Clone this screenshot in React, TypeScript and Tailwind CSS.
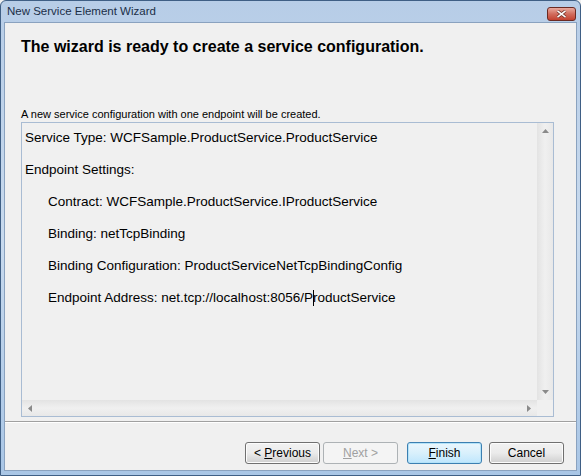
import React from "react";

const font = { fontFamily: '"Liberation Sans", Arial, sans-serif' };

// Tiny scrollbar arrow glyph
const Arrow = ({ dir }: { dir: "up" | "down" | "left" | "right" }) => {
  const pts = {
    up: "0,4 7,4 3.5,0",
    down: "0,0 7,0 3.5,4",
    left: "4,0 4,7 0,3.5",
    right: "0,0 0,7 4,3.5",
  }[dir];
  const vertical = dir === "up" || dir === "down";
  return (
    <svg width={vertical ? 7 : 4} height={vertical ? 4 : 7} viewBox={vertical ? "0 0 7 4" : "0 0 4 7"}>
      <polygon points={pts} fill="#8a8a8a" />
    </svg>
  );
};

const lines: { text: React.ReactNode; indent?: boolean }[] = [
  { text: "Service Type: WCFSample.ProductService.ProductService" },
  { text: "Endpoint Settings:" },
  { text: "Contract: WCFSample.ProductService.IProductService", indent: true },
  { text: "Binding: netTcpBinding", indent: true },
  { text: "Binding Configuration: ProductServiceNetTcpBindingConfig", indent: true },
  {
    text: (
      <>
        {"Endpoint Address: net.tcp://localhost:8056/P"}
        <span className="relative inline-block h-[16px] w-0 align-top">
          <span className="absolute left-0 top-0 h-[16px] w-px bg-black" />
        </span>
        {"roductService"}
      </>
    ),
    indent: true,
  },
];

const Button = ({
  children,
  variant = "normal",
}: {
  children: React.ReactNode;
  variant?: "normal" | "default" | "disabled";
}) => {
  const cls =
    variant === "disabled"
      ? "border-[#adb2b5] bg-[#f4f4f4] text-[#a0a0a0]"
      : variant === "default"
      ? "border-[#3c7fb1] bg-gradient-to-b from-[#eaf6fd] via-[#d9f0fc] to-[#bee6fd] text-black shadow-[inset_0_0_0_1px_#b4e3f9]"
      : "border-[#707070] bg-gradient-to-b from-[#f2f2f2] via-[#ebebeb] to-[#cfcfcf] text-black shadow-[inset_0_0_0_1px_#fcfcfc]";
  return (
    <div
      className={`flex h-[22px] w-[75px] items-center justify-center whitespace-pre rounded-[3px] border text-[12px] ${cls}`}
      style={font}
    >
      {children}
    </div>
  );
};

export default function App() {
  return (
    <div className="h-[476px] w-[581px] overflow-hidden bg-[#f0f0f0]">
      <div className="flex h-full w-full flex-col rounded-t-[6px] border border-[#3f5f85] bg-gradient-to-b from-[#b7cde7] via-[#c8daee] to-[#a9c6e6]">
        {/* Title bar */}
        <div className="relative flex h-[21px] shrink-0 items-center pl-[6px]">
          <span className="text-[11.5px] text-[#1b2f47]" style={font}>
            New Service Element Wizard
          </span>
          <div className="absolute right-[4px] top-[6px] flex h-[14px] w-[29px] items-center justify-center rounded-[3px] border border-[#6b2a22] bg-gradient-to-b from-[#e8a99e] via-[#d16c5d] to-[#c3402f]">
            <svg width="11" height="8" viewBox="0 0 11 8">
              <path d="M1.5 0.8 L9.5 7.2 M9.5 0.8 L1.5 7.2" stroke="#6b2a22" strokeWidth="3" />
              <path d="M1.5 0.8 L9.5 7.2 M9.5 0.8 L1.5 7.2" stroke="#ffffff" strokeWidth="1.6" />
            </svg>
          </div>
        </div>

        {/* Client area */}
        <div className="mx-[3px] mb-[4px] flex flex-1 flex-col border border-[#8aa2bf] bg-[#f0f0f0]">
          <div className="px-[16px]">
            <h1 className="mt-[14px] text-[16px] font-bold leading-[20px] text-black" style={font}>
              The wizard is ready to create a service configuration.
            </h1>
            <p className="mt-[50px] text-[11px] leading-[14px] text-black" style={font}>
              A new service configuration with one endpoint will be created.
            </p>

            {/* Read-only text box */}
            <div className="mt-[1px] flex h-[295px] w-[533px] flex-col border border-[#a9bcd3] bg-[#f0f0f0]">
              <div className="flex min-h-0 flex-1">
                <div className="flex flex-1 flex-col gap-[16px] pl-[3px] pt-[7px] text-[13.5px] leading-[16px] text-black" style={font}>
                  {lines.map((l, i) => (
                    <div key={i} className={`whitespace-nowrap ${l.indent ? "pl-[23px]" : ""}`}>
                      {l.text}
                    </div>
                  ))}
                </div>
                <div className="flex w-[16px] flex-col items-center justify-between bg-gradient-to-r from-[#e3e3e3] via-[#f0f0f0] to-[#e8e8e8] py-[6px]">
                  <Arrow dir="up" />
                  <Arrow dir="down" />
                </div>
              </div>
              <div className="flex h-[16px] shrink-0">
                <div className="flex flex-1 items-center justify-between bg-gradient-to-b from-[#e3e3e3] via-[#f0f0f0] to-[#e8e8e8] px-[6px]">
                  <Arrow dir="left" />
                  <Arrow dir="right" />
                </div>
                <div className="w-[16px] bg-[#f0f0f0]" />
              </div>
            </div>
          </div>

          {/* Separator */}
          <div className="mt-[4px] h-[2px] border-t border-[#a0a0a0] border-b border-b-white" />

          {/* Buttons */}
          <div className="mt-[19px] flex pl-[240px]">
            <Button>
              {"< "}
              <span className="underline">P</span>
              {"revious"}
            </Button>
            <div className="ml-[3px]">
              <Button variant="disabled">
                <span className="underline">N</span>
                {"ext >"}
              </Button>
            </div>
            <div className="ml-[9px]">
              <Button variant="default">
                <span className="underline">F</span>
                {"inish"}
              </Button>
            </div>
            <div className="ml-[7px]">
              <Button>Cancel</Button>
            </div>
          </div>
        </div>
      </div>
    </div>
  );
}
